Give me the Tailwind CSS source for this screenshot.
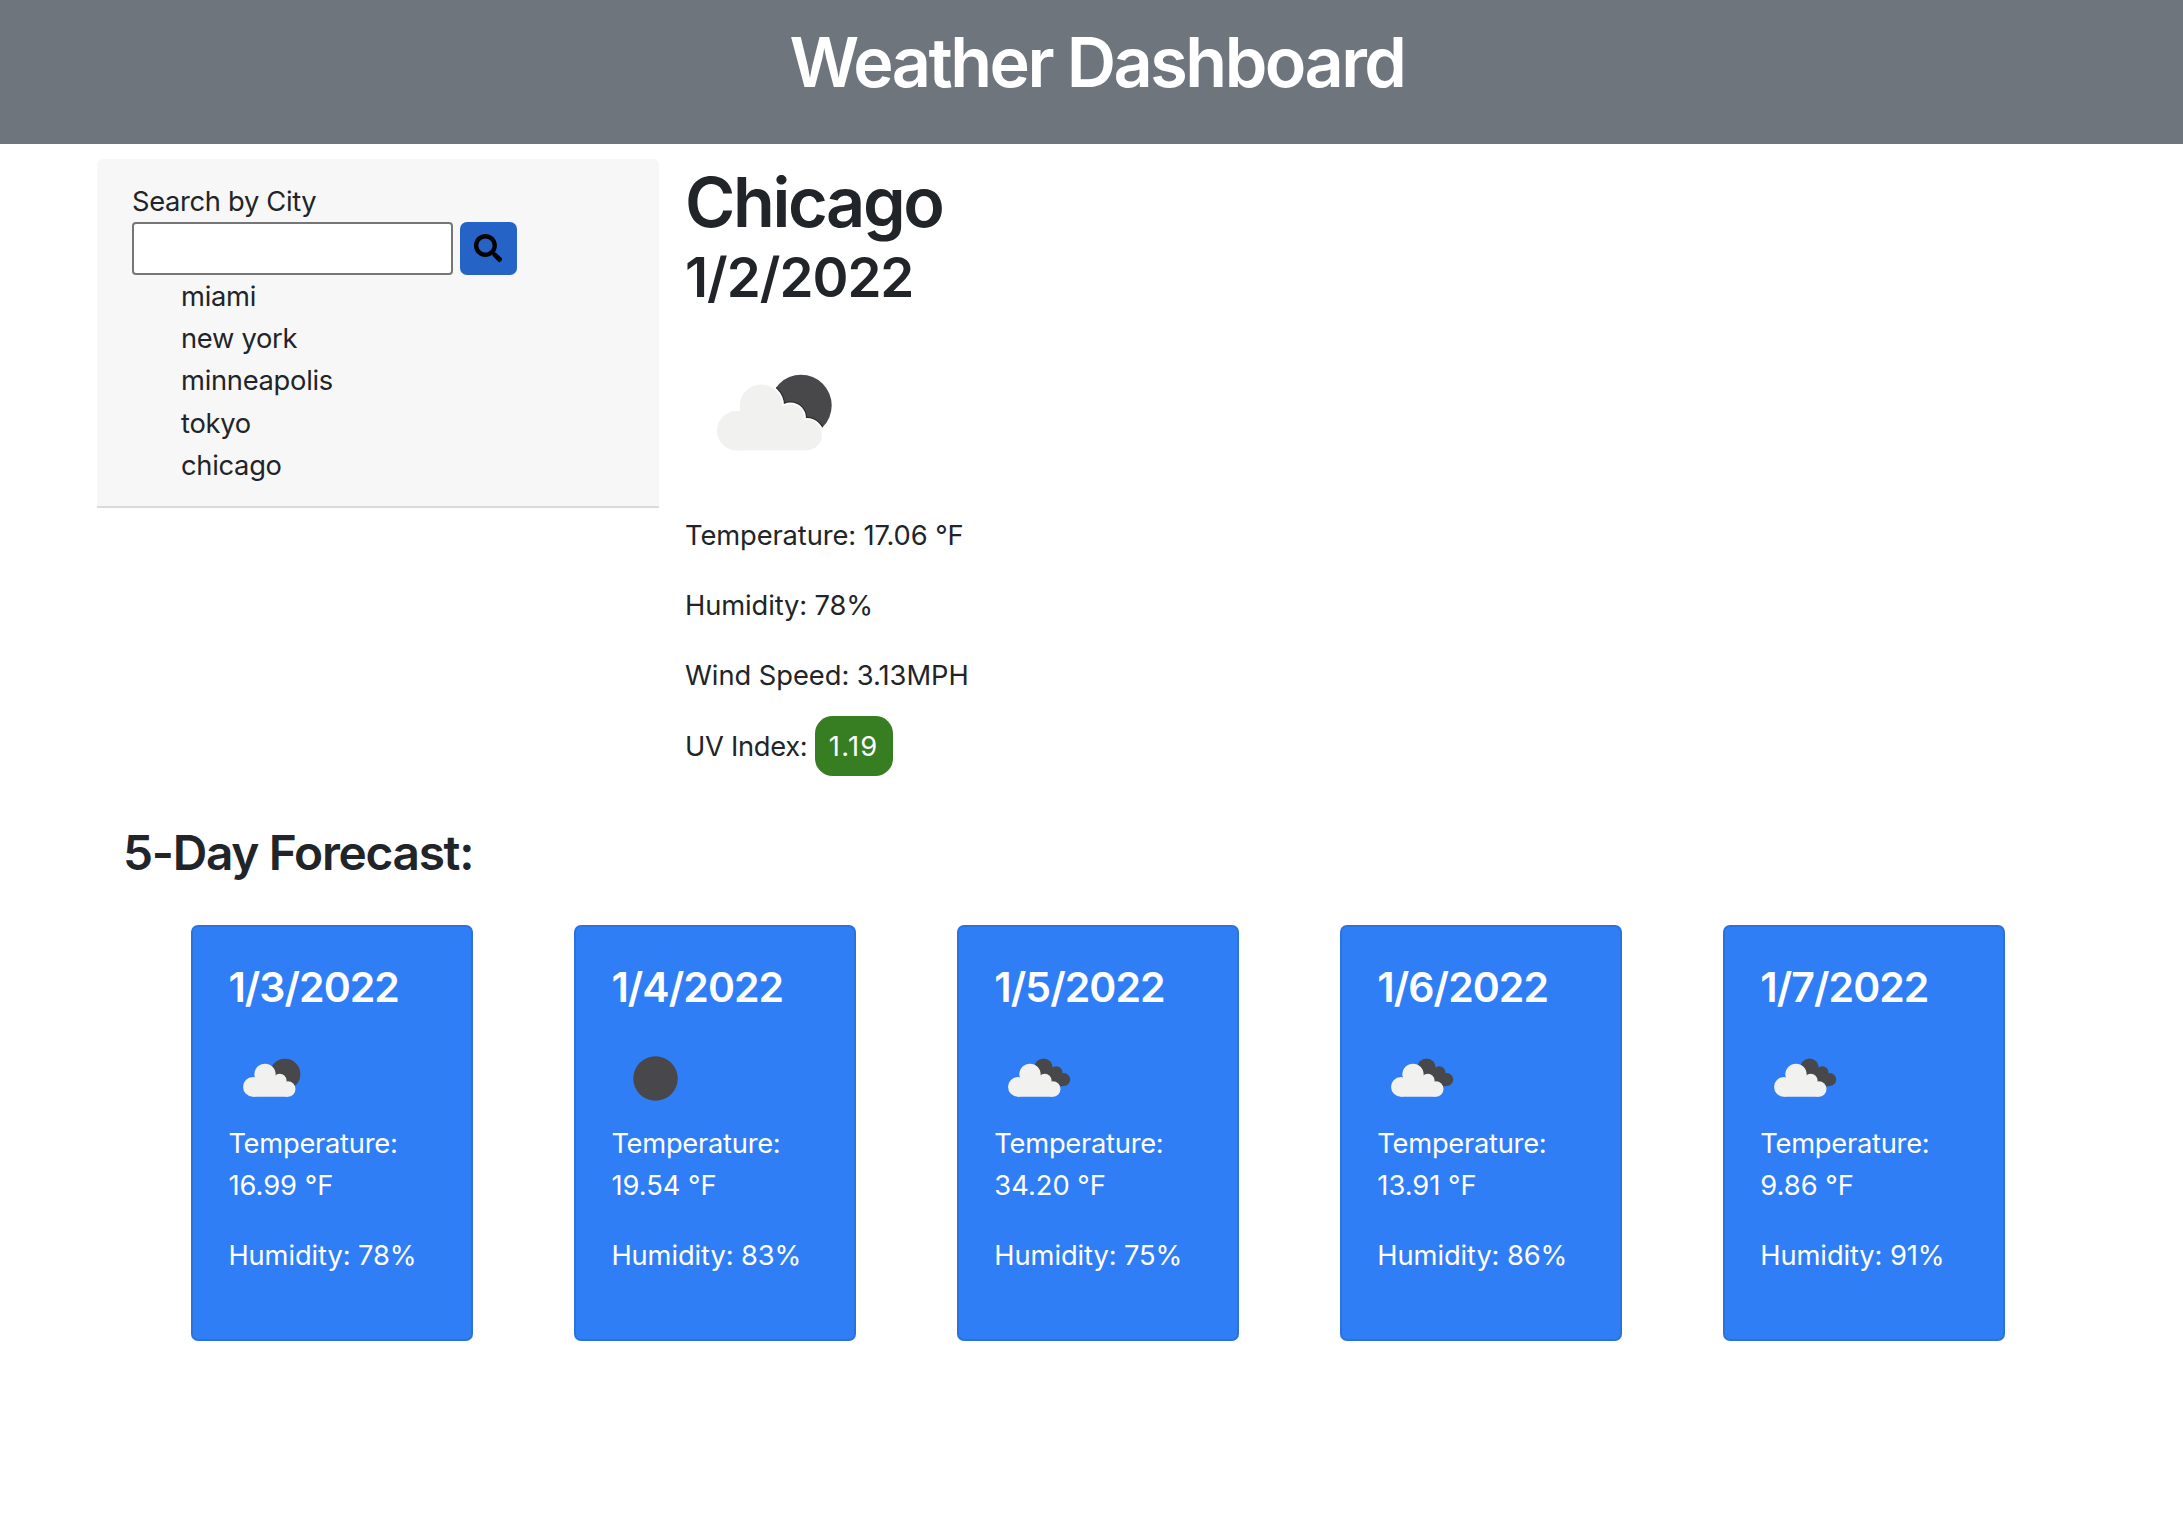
<!DOCTYPE html>
<html lang="en">
<head>
<meta charset="utf-8">
<title>Weather Dashboard</title>
<script src="https://cdn.jsdelivr.net/npm/@tailwindcss/browser@4"></script>
</head>
<body class="min-h-screen bg-white font-['Inter',sans-serif] text-[27.3px] leading-[42.24px] text-[#212529]">

<svg class="hidden" aria-hidden="true">
  <symbol id="cloud" viewBox="0 0 176 176">
    <circle cx="76" cy="80.7" r="21.3"/>
    <circle cx="51.7" cy="105.7" r="19.7"/>
    <circle cx="105.5" cy="93" r="13.7"/>
    <circle cx="121.7" cy="110" r="15.3"/>
    <path d="M51.7 125.4V95L76 80l30 12 15.7 12v21.4z"/>
  </symbol>
  <symbol id="few-clouds" viewBox="0 0 176 176">
    <circle cx="116" cy="80.4" r="30.7" fill="#48484a"/>
    <use href="#cloud" fill="#f1f1f0"/>
  </symbol>
  <symbol id="clear" viewBox="0 0 176 176">
    <circle cx="91" cy="89" r="44.5" fill="#48484a"/>
  </symbol>
  <symbol id="broken-clouds" viewBox="0 0 176 176">
    <g fill="#48484a">
      <circle cx="101" cy="67.5" r="18.5"/>
      <circle cx="126.5" cy="77" r="12.5"/>
      <circle cx="141.5" cy="91" r="13"/>
      <path d="M85 70l16-10 28 12 14 20-2 12-31 4z"/>
    </g>
    <use href="#cloud" x="-2" fill="#f1f1f0"/>
  </symbol>
</svg>

<header class="h-[144.3px] bg-[#6e757d] pt-5 pl-[11px] text-center text-white">
  <h1 class="text-[68.3px] leading-[84.5px] font-semibold tracking-[-2.5px]">Weather Dashboard</h1>
</header>

<div class="flex items-start gap-[26px] pl-[96.5px] pt-[14.4px]">
  <aside class="w-[562.5px] rounded-t-[6px] border-b-2 border-[#dadada] bg-[#f7f7f7] px-[35.5px] pt-[22.3px] pb-[19px]">
    <label for="city" class="-mb-px block tracking-[-0.32px]">Search by City</label>
    <div class="flex gap-[7px]">
      <input id="city" type="text" class="h-[52.5px] w-[321px] rounded-[4px] border-2 border-[#767676] bg-white">
      <button aria-label="Search" class="flex h-[52.5px] w-[56.5px] items-center justify-center rounded-[7px] bg-[#2563c6]">
        <svg class="h-[28.2px] w-[28.2px]" viewBox="0 0 512 512" fill="#000"><path d="M505 442.7L405.3 343c-4.5-4.5-10.6-7-17-7H372c27.6-35.3 44-79.7 44-128C416 93.1 322.9 0 208 0S0 93.1 0 208s93.1 208 208 208c48.3 0 92.7-16.4 128-44v16.3c0 6.4 2.5 12.5 7 17l99.7 99.7c9.4 9.4 24.6 9.4 33.9 0l28.3-28.3c9.4-9.4 9.4-24.6.1-34zM208 336c-70.7 0-128-57.2-128-128 0-70.7 57.2-128 128-128 70.7 0 128 57.2 128 128 0 70.7-57.2 128-128 128z"/></svg>
      </button>
    </div>
    <ul class="pt-[1.3px] pl-[49px] tracking-[-0.28px]">
      <li>miami</li>
      <li>new york</li>
      <li>minneapolis</li>
      <li>tokyo</li>
      <li>chicago</li>
    </ul>
  </aside>

  <main class="pt-[1.3px]">
    <h2 class="text-[68.3px] leading-[84.5px] font-semibold tracking-[-2.35px]">Chicago</h2>
    <h3 class="text-[54.6px] leading-[67.6px] font-semibold tracking-[-1.02px]">1/2/2022</h3>
    <svg class="mt-[12.5px] mb-[14px] size-[176px]" viewBox="0 0 176 176">
      <clipPath id="moon"><circle cx="116" cy="80.4" r="30.7"/></clipPath>
      <circle cx="116" cy="80.4" r="30.7" fill="#48484a"/>
      <use href="#cloud" stroke="#2f2f31" stroke-width="6" clip-path="url(#moon)"/>
      <use href="#cloud" stroke="#fff" stroke-width="3.5"/>
      <use href="#cloud" fill="#f1f1f0"/>
    </svg>
    <div class="flex flex-col gap-[28.16px]">
      <p class="tracking-[-0.1px]">Temperature: 17.06 °F</p>
      <p class="tracking-[-0.1px]">Humidity: 78%</p>
      <p class="tracking-[-0.04px]">Wind Speed: 3.13MPH</p>
      <p class="tracking-[-0.3px]">UV Index: <span class="rounded-[17.6px] bg-[#377d22] px-[14px] py-[13.5px] tracking-[1.3px] text-white">1.19</span></p>
    </div>
  </main>
</div>

<section class="pt-[56.5px]">
  <h3 class="pl-[123px] text-[47.8px] leading-[59.1px] font-semibold tracking-[-1.3px]">5-Day Forecast:</h3>
  <div id="forecast" class="mt-[41.2px] flex gap-[101.7px] pl-[191.4px]"></div>
</section>

<template id="day">
  <article class="h-[416px] w-[281.3px] shrink-0 rounded-[7px] border-2 border-[#2c72dd] bg-[#307ef6] px-[35px] pt-[35px] text-white">
    <h4 class="text-[41px] leading-[50.7px] font-semibold tracking-[-0.95px]"></h4>
    <svg class="-ml-px mt-[21.5px] mb-px size-[88px]"><use/></svg>
    <p class="mb-[27.8px]"><span class="block tracking-[-0.26px]">Temperature:</span><span class="temp block"></span></p>
    <p class="hum tracking-[-0.1px]"></p>
  </article>
</template>

<script>
  const days = [
    ["1/3/2022", "few-clouds", "16.99", 78],
    ["1/4/2022", "clear", "19.54", 83],
    ["1/5/2022", "broken-clouds", "34.20", 75],
    ["1/6/2022", "broken-clouds", "13.91", 86],
    ["1/7/2022", "broken-clouds", "9.86", 91],
  ];
  const tpl = document.getElementById("day");
  for (const [date, icon, temp, humidity] of days) {
    const card = tpl.content.cloneNode(true);
    card.querySelector("h4").textContent = date;
    card.querySelector("use").setAttribute("href", "#" + icon);
    card.querySelector(".temp").textContent = temp + " °F";
    card.querySelector(".hum").textContent = "Humidity: " + humidity + "%";
    document.getElementById("forecast").append(card);
  }
</script>
</body>
</html>
